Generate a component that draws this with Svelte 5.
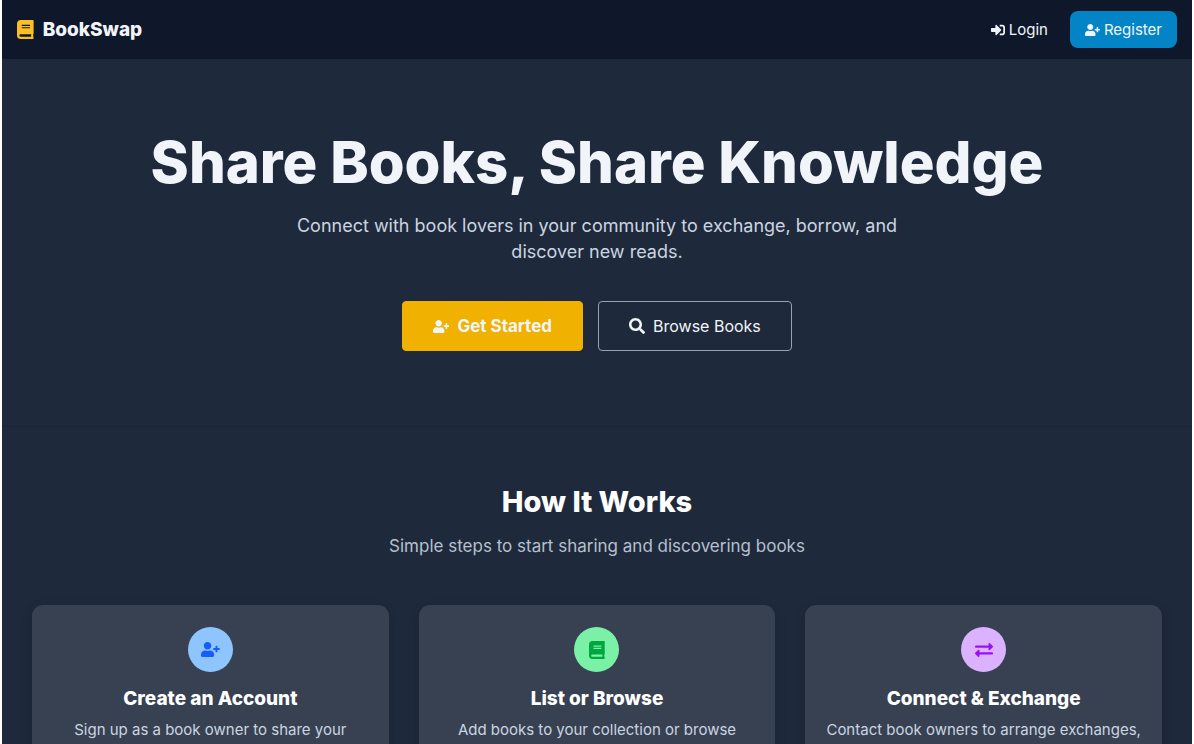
<script>
	const steps = [
		{
			title: 'Create an Account',
			text: 'Sign up as a book owner to share your',
			icon: 'user',
			tone: 'blue'
		},
		{
			title: 'List or Browse',
			text: 'Add books to your collection or browse',
			icon: 'book',
			tone: 'green'
		},
		{
			title: 'Connect & Exchange',
			text: 'Contact book owners to arrange exchanges,',
			icon: 'exchange',
			tone: 'purple'
		}
	];
</script>

<svelte:head>
	<title>BookSwap</title>
</svelte:head>

{#snippet icon(name)}
	{#if name === 'user'}
		<svg class="icon wide" viewBox="0 0 640 512" aria-hidden="true">
			<path d="M624 208h-64v-64c0-8.800-7.200-16-16-16h-32c-8.800 0-16 7.200-16 16v64h-64c-8.800 0-16 7.200-16 16v32c0 8.800 7.200 16 16 16h64v64c0 8.800 7.200 16 16 16h32c8.800 0 16-7.200 16-16v-64h64c8.800 0 16-7.200 16-16v-32c0-8.800-7.200-16-16-16zm-400 48c70.700 0 128-57.300 128-128S294.700 0 224 0 96 57.300 96 128s57.300 128 128 128zm89.600 32h-16.700c-22.200 10.200-46.900 16-72.900 16s-50.600-5.800-72.900-16h-16.700C60.200 288 0 348.200 0 422.400V464c0 26.500 21.500 48 48 48h352c26.500 0 48-21.500 48-48v-41.600c0-74.200-60.200-134.400-134.400-134.400z" />
		</svg>
	{:else if name === 'book'}
		<svg class="icon book" viewBox="0 0 448 512" aria-hidden="true">
			<path d="M448 360V24c0-13.300-10.700-24-24-24H96C43 0 0 43 0 96v320c0 53 43 96 96 96h328c13.300 0 24-10.700 24-24v-16c0-7.500-3.500-14.300-8.900-18.700-4.200-15.400-4.200-59.300 0-74.700 5.400-4.300 8.900-11.100 8.900-18.600zM128 134c0-3.300 2.700-6 6-6h212c3.300 0 6 2.700 6 6v20c0 3.300-2.700 6-6 6H134c-3.300 0-6-2.700-6-6v-20zm0 64c0-3.300 2.700-6 6-6h212c3.300 0 6 2.700 6 6v20c0 3.300-2.700 6-6 6H134c-3.300 0-6-2.700-6-6v-20zm253.400 250H96c-17.700 0-32-14.300-32-32 0-17.600 14.400-32 32-32h285.400c-1.900 17.100-1.900 46.900 0 64z" />
		</svg>
	{:else if name === 'exchange'}
		<svg class="icon" viewBox="0 0 512 512" aria-hidden="true">
			<path d="M0 168v-16c0-13 11-24 24-24h360V80c0-21 26-32 41-17l80 80c9 9 9 25 0 34l-80 80c-15 15-41 4-41-17v-48H24c-13 0-24-11-24-24zm488 152H128v-48c0-21-26-32-41-17L7 335c-9 9-9 25 0 34l80 80c15 15 41 4 41-17v-48h360c13 0 24-11 24-24v-16c0-13-11-24-24-24z" />
		</svg>
	{:else if name === 'login'}
		<svg class="icon" viewBox="0 0 512 512" aria-hidden="true">
			<path d="M416 448h-84c-7 0-12-5-12-12v-40c0-7 5-12 12-12h84c18 0 32-14 32-32V160c0-18-14-32-32-32h-84c-7 0-12-5-12-12V76c0-7 5-12 12-12h84c53 0 96 43 96 96v192c0 53-43 96-96 96zm-47-209L201 71c-15-15-41-4-41 17v96H24c-13 0-24 11-24 24v96c0 13 11 24 24 24h136v96c0 22 26 32 41 17l168-168c9-10 9-25 0-34z" />
		</svg>
	{:else}
		<svg class="icon" viewBox="0 0 512 512" aria-hidden="true">
			<path d="M505 443 405 343c-4-4-10-7-17-7h-16c28-35 44-80 44-128C416 93 323 0 208 0S0 93 0 208s93 208 208 208c48 0 93-16 128-44v16c0 7 3 13 7 17l100 100c9 9 24 9 34 0l28-28c9-10 9-25 0-34zM208 336c-71 0-128-57-128-128S137 80 208 80s128 57 128 128-57 128-128 128z" />
		</svg>
	{/if}
{/snippet}

<div class="page">
	<nav>
		<a class="brand" href="/">{@render icon('book')} BookSwap</a>
		<div class="nav-links">
			<a class="login" href="/login">{@render icon('login')} Login</a>
			<a class="register" href="/register">{@render icon('user')} Register</a>
		</div>
	</nav>

	<section class="hero">
		<h1>Share Books, Share Knowledge</h1>
		<p>Connect with book lovers in your community to exchange, borrow, and discover new reads.</p>
		<div class="actions">
			<a class="btn btn-primary" href="/register">{@render icon('user')} Get Started</a>
			<a class="btn btn-outline" href="/books">{@render icon('search')} Browse Books</a>
		</div>
	</section>

	<section class="how">
		<h2>How It Works</h2>
		<p class="subtitle">Simple steps to start sharing and discovering books</p>
		<div class="steps">
			{#each steps as step}
				<article class="card">
					<div class="badge {step.tone}">{@render icon(step.icon)}</div>
					<h3>{step.title}</h3>
					<p>{step.text}</p>
				</article>
			{/each}
		</div>
	</section>
</div>

<style>
	:global(body) {
		margin: 0;
		background: #fff;
	}

	.page {
		margin: 0 2px;
		background: #1e293b;
		color: #f1f5f9;
		font-family: Inter, sans-serif;
		overflow: hidden;
	}

	a {
		color: inherit;
		text-decoration: none;
	}

	h1,
	h2,
	h3,
	p {
		margin: 0;
	}

	.icon {
		width: 1em;
		height: 1em;
		fill: currentColor;
		flex-shrink: 0;
	}

	.icon.wide {
		width: 1.25em;
	}

	.icon.book {
		width: 0.875em;
	}

	nav {
		display: flex;
		align-items: center;
		justify-content: space-between;
		padding: 11px 15px;
		background: #0f172a;
	}

	.brand {
		display: flex;
		align-items: center;
		gap: 9px;
		font-size: 19px;
		font-weight: 800;
		line-height: 22px;
	}

	.brand .icon {
		color: #fbbf24;
	}

	.nav-links {
		display: flex;
		align-items: center;
		gap: 22px;
		font-size: 15px;
		line-height: 21px;
	}

	.login,
	.register {
		display: flex;
		align-items: center;
		gap: 4px;
	}

	.nav-links .icon {
		font-size: 14px;
	}

	.nav-links .wide {
		font-size: 12px;
	}

	.register {
		padding: 8px 15px;
		border-radius: 8px;
		background: #0284c7;
	}

	.hero {
		display: flex;
		flex-direction: column;
		align-items: center;
		padding: 75px 30px;
		border-bottom: 1px solid #1a2435;
		text-align: center;
	}

	h1 {
		font-size: 58px;
		font-weight: 800;
		line-height: 56px;
	}

	.hero p {
		max-width: 628px;
		margin-top: 23px;
		color: #cbd5e1;
		font-size: 18px;
		line-height: 26px;
	}

	.actions {
		display: flex;
		gap: 15px;
		margin-top: 36px;
	}

	.btn {
		display: flex;
		align-items: center;
		gap: 8px;
		padding: 12px 30px;
		border: 1px solid;
		border-radius: 4px;
		font-size: 16px;
		line-height: 24px;
	}

	.btn .wide {
		font-size: 13px;
	}

	.btn-primary {
		border-color: #f0b100;
		background: #f0b100;
		font-size: 17px;
		font-weight: 700;
	}

	.btn-outline {
		border-color: #94a3b8;
	}

	.how {
		padding: 59px 30px;
		text-align: center;
	}

	h2 {
		color: #fff;
		font-size: 29px;
		font-weight: 800;
		line-height: 32px;
	}

	.subtitle {
		margin-top: 16px;
		color: #b6c0ce;
		font-size: 17px;
		line-height: 24px;
	}

	.steps {
		display: grid;
		grid-template-columns: repeat(3, 1fr);
		gap: 30px;
		margin-top: 47px;
	}

	.card {
		display: flex;
		flex-direction: column;
		align-items: center;
		padding: 22px 15px;
		border-radius: 11px;
		background: #374151;
		box-shadow: 0 4px 12px rgba(0, 0, 0, 0.15);
	}

	.badge {
		display: flex;
		align-items: center;
		justify-content: center;
		width: 45px;
		height: 45px;
		border-radius: 50%;
		font-size: 18px;
	}

	.badge .wide {
		font-size: 15px;
	}

	.blue {
		background: #8ec5ff;
		color: #155dfc;
	}

	.green {
		background: #7bf1a8;
		color: #00a63e;
	}

	.purple {
		background: #dab2ff;
		color: #9810fa;
	}

	h3 {
		margin-top: 14px;
		color: #fff;
		font-size: 19px;
		font-weight: 800;
		line-height: 26px;
	}

	.card p {
		margin-top: 7px;
		color: #cbd5e1;
		font-size: 15px;
		line-height: 22px;
	}
</style>
